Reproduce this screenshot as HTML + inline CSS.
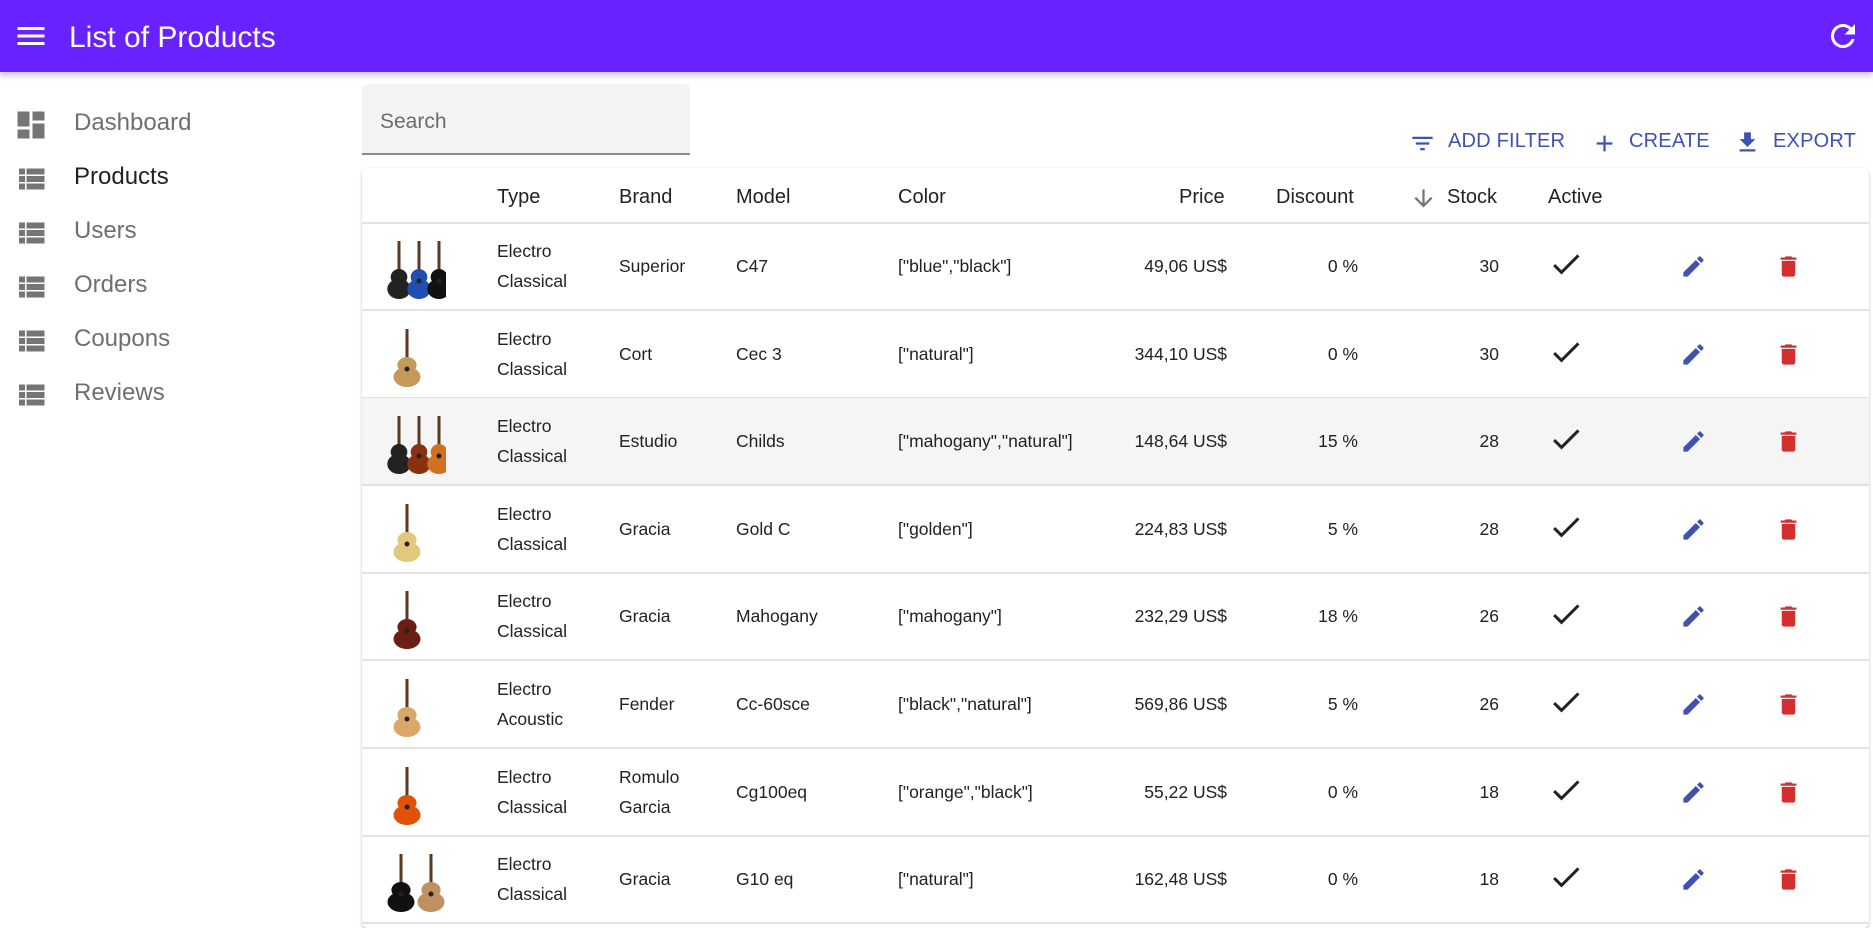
<!DOCTYPE html>
<html><head><meta charset="utf-8"><style>
*{margin:0;padding:0;box-sizing:border-box}
body{width:1873px;height:894px;overflow:hidden;background:#fff;font-family:"Liberation Sans",Arial,sans-serif;position:relative;color:rgba(0,0,0,.87)}
.hdr{position:absolute;left:0;top:0;width:1873px;height:72px;background:#6822ff;box-shadow:0 3px 6px rgba(0,0,0,.25);z-index:5}
.abs{position:absolute}
.nav{position:absolute;left:0;height:54px;width:340px}
.nav svg{position:absolute;left:13px;top:9px}
.nav span{position:absolute;left:74px;top:11px;font-size:24px;color:#6f6f6f}
.search{position:absolute;left:362px;top:84px;width:328px;height:71px;background:#f4f4f4;border-bottom:2px solid #8a8a8a;border-radius:5px 5px 0 0}
.search span{position:absolute;left:18px;top:26px;font-size:21px;color:#6b6b6b}
.btn{position:absolute;top:130px;font-size:20px;color:#3f51b5;letter-spacing:.2px}
.card{position:absolute;left:362px;top:168px;width:1507px;height:760px;background:#fff;border-radius:5px;box-shadow:0 1px 3px rgba(0,0,0,.2),0 1px 1px rgba(0,0,0,.12)}
.th{position:absolute;top:186px;font-size:20px;color:#222}
.row{position:absolute;left:362px;width:1507px;height:88px;border-bottom:2px solid #e2e2e2}
.c{position:absolute;top:0;height:86px;display:flex;align-items:center;font-size:17.5px;line-height:30px;color:#222}
.r{justify-content:flex-end}
</style></head><body>
<div class="hdr">
<svg class="abs" style="left:13px;top:18px" width="36" height="36" viewBox="0 0 24 24"><path fill="#fff" d="M3 18h18v-2H3v2zm0-5h18v-2H3v2zm0-7v2h18V6H3z"/></svg>
<div class="abs" style="left:69px;top:21px;font-size:30px;color:#fff">List of Products</div>
<svg class="abs" style="left:1825px;top:18px" width="36" height="36" viewBox="0 0 24 24"><path fill="#fff" d="M17.65 6.35C16.2 4.9 14.21 4 12 4c-4.42 0-7.99 3.58-7.99 8s3.57 8 7.99 8c3.730 0 6.84-2.55 7.73-6h-2.08c-.82 2.33-3.04 4-5.650 4-3.31 0-6-2.690-6-6s2.69-6 6-6c1.66 0 3.14.69 4.22 1.78L13 11h7V4l-2.35 2.35z"/></svg>
</div>

<div class="nav" style="top:98px"><svg width="36" height="36" viewBox="0 0 24 24"><path fill="#757575" d="M3 13h8V3H3v10zm0 8h8v-6H3v6zm10 0h8V11h-8v10zm0-18v6h8V3h-8z"/></svg><span>Dashboard</span></div>
<div class="nav" style="top:152px"><svg width="36" height="36" viewBox="0 0 24 24"><path fill="#757575" d="M4 14h4v-4H4v4zm0 5h4v-4H4v4zM4 9h4V5H4v4zm5 5h12v-4H9v4zm0 5h12v-4H9v4zM9 5v4h12V5H9z"/></svg><span style="color:#222">Products</span></div>
<div class="nav" style="top:206px"><svg width="36" height="36" viewBox="0 0 24 24"><path fill="#757575" d="M4 14h4v-4H4v4zm0 5h4v-4H4v4zM4 9h4V5H4v4zm5 5h12v-4H9v4zm0 5h12v-4H9v4zM9 5v4h12V5H9z"/></svg><span>Users</span></div>
<div class="nav" style="top:260px"><svg width="36" height="36" viewBox="0 0 24 24"><path fill="#757575" d="M4 14h4v-4H4v4zm0 5h4v-4H4v4zM4 9h4V5H4v4zm5 5h12v-4H9v4zm0 5h12v-4H9v4zM9 5v4h12V5H9z"/></svg><span>Orders</span></div>
<div class="nav" style="top:314px"><svg width="36" height="36" viewBox="0 0 24 24"><path fill="#757575" d="M4 14h4v-4H4v4zm0 5h4v-4H4v4zM4 9h4V5H4v4zm5 5h12v-4H9v4zm0 5h12v-4H9v4zM9 5v4h12V5H9z"/></svg><span>Coupons</span></div>
<div class="nav" style="top:368px"><svg width="36" height="36" viewBox="0 0 24 24"><path fill="#757575" d="M4 14h4v-4H4v4zm0 5h4v-4H4v4zM4 9h4V5H4v4zm5 5h12v-4H9v4zm0 5h12v-4H9v4zM9 5v4h12V5H9z"/></svg><span>Reviews</span></div>

<div class="search"><span>Search</span></div>

<svg class="abs" style="left:1409px;top:130px" width="27" height="27" viewBox="0 0 24 24"><path fill="#3f51b5" d="M10 18h4v-2h-4v2zM3 6v2h18V6H3zm3 7h12v-2H6v2z"/></svg>
<div class="btn" style="left:1448px">ADD FILTER</div>
<svg class="abs" style="left:1591px;top:130px" width="27" height="27" viewBox="0 0 24 24"><path fill="#3f51b5" d="M19 13h-6v6h-2v-6H5v-2h6V5h2v6h6v2z"/></svg>
<div class="btn" style="left:1629px">CREATE</div>
<svg class="abs" style="left:1734px;top:129px" width="27" height="27" viewBox="0 0 24 24"><path fill="#3f51b5" d="M19 9h-4V3H9v6H5l7 7 7-7zM5 18v2h14v-2H5z"/></svg>
<div class="btn" style="left:1773px">EXPORT</div>

<div class="card"></div>
<div class="abs" style="left:362px;top:222px;width:1507px;height:2px;background:#e2e2e2"></div>
<div class="th" style="left:497px">Type</div>
<div class="th" style="left:619px">Brand</div>
<div class="th" style="left:736px">Model</div>
<div class="th" style="left:898px">Color</div>
<div class="th" style="left:1179px">Price</div>
<div class="th" style="left:1276px">Discount</div>
<svg class="abs" style="left:1410px;top:185px" width="27" height="27" viewBox="0 0 24 24"><path fill="#757575" d="M20 12l-1.41-1.41L13 16.17V4h-2v12.17l-5.58-5.59L4 12l8 8 8-8z"/></svg>
<div class="th" style="left:1447px">Stock</div>
<div class="th" style="left:1548px">Active</div>

<div id="rows"></div>
<script>
const data=[
["Electro<br>Classical","Superior","C47",'["blue","black"]',"49,06 US$","0 %","30",["#222","#1f4fb0","#111"]],
["Electro<br>Classical","Cort","Cec 3",'["natural"]',"344,10 US$","0 %","30",["#c49a5a"]],
["Electro<br>Classical","Estudio","Childs",'["mahogany","natural"]',"148,64 US$","15 %","28",["#222","#8a3010","#d07020"]],
["Electro<br>Classical","Gracia","Gold C",'["golden"]',"224,83 US$","5 %","28",["#e2c87a"]],
["Electro<br>Classical","Gracia","Mahogany",'["mahogany"]',"232,29 US$","18 %","26",["#6a1e14"]],
["Electro<br>Acoustic","Fender","Cc-60sce",'["black","natural"]',"569,86 US$","5 %","26",["#d9a868"]],
["Electro<br>Classical","Romulo<br>Garcia","Cg100eq",'["orange","black"]',"55,22 US$","0 %","18",["#e0520a"]],
["Electro<br>Classical","Gracia","G10 eq",'["natural"]',"162,48 US$","0 %","18",["#111","#c09060"]]];
function guitar(col,x,w){return `<g transform="translate(${x},0)"><rect x="${w/2-1.5}" y="4" width="3" height="30" fill="#5a3a20"/><ellipse cx="${w/2}" cy="40" rx="${w*0.32}" ry="8" fill="${col}"/><ellipse cx="${w/2}" cy="52" rx="${w*0.45}" ry="10" fill="${col}"/><circle cx="${w/2}" cy="44" r="2.5" fill="#222"/></g>`}
let h="";
data.forEach((d,i)=>{
 const top=223+i*87.6;
 const gs=d[7];const w=60/gs.length;
 let g=gs.map((c,k)=>guitar(c,k*w,Math.min(w*1.3,30))).join("");
 h+=`<div class="row" style="top:${top}px;${i==2?'background:#f5f5f5':''}">
 <svg class="abs" style="left:${gs.length==1?30:24}px;top:14px" width="${gs.length==1?30:60}" height="62" viewBox="0 0 ${gs.length==1?30:60} 62">${g}</svg>
 <div class="c" style="left:135px">${d[0]}</div>
 <div class="c" style="left:257px">${d[1]}</div>
 <div class="c" style="left:374px">${d[2]}</div>
 <div class="c" style="left:536px">${d[3]}</div>
 <div class="c r" style="left:700px;width:165px">${d[4]}</div>
 <div class="c r" style="left:880px;width:116px">${d[5]}</div>
 <div class="c r" style="left:1000px;width:137px">${d[6]}</div>
 <svg class="abs" style="left:1186px;top:23px" width="36" height="36" viewBox="0 0 24 24"><path fill="#222" d="M9 16.2L4.8 12l-1.4 1.4L9 19 21 7l-1.4-1.4L9 16.2z"/></svg>
 <svg class="abs" style="left:1318px;top:30px" width="27" height="27" viewBox="0 0 24 24"><path fill="#3f51b5" d="M3 17.25V21h3.75L17.81 9.94l-3.75-3.75L3 17.25zM20.71 7.04c.39-.39.39-1.02 0-1.41l-2.34-2.34a.996.996 0 00-1.41 0l-1.83 1.83 3.75 3.75 1.83-1.83z"/></svg>
 <svg class="abs" style="left:1413px;top:30px" width="27" height="27" viewBox="0 0 24 24"><path fill="#d32f2f" d="M6 19c0 1.1.9 2 2 2h8c1.1 0 2-.9 2-2V7H6v12zM19 4h-3.5l-1-1h-5l-1 1H5v2h14V4z"/></svg>
 </div>`;
});
document.getElementById("rows").innerHTML=h;
</script>
</body></html>
